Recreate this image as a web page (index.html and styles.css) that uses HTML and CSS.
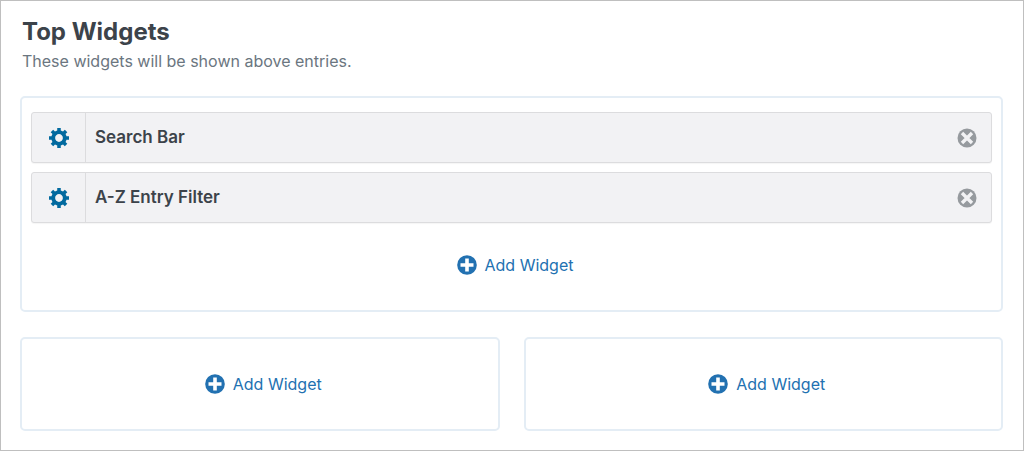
FILE: index.html
```html
<!DOCTYPE html>
<html lang="en">
<head>
<meta charset="utf-8">
<title>Top Widgets</title>
<link rel="stylesheet" href="styles.css">
</head>
<body>
<svg class="sprite" aria-hidden="true">
  <symbol id="gear" viewBox="1 2 17 17"><path fill-rule="evenodd" d="M18 12h-2.18c-.17.7-.44 1.35-.81 1.93l1.54 1.54-2.1 2.1-1.54-1.54c-.58.36-1.23.63-1.91.79V19H8v-2.18c-.68-.16-1.33-.43-1.91-.79l-1.54 1.54-2.12-2.12 1.54-1.54c-.36-.58-.63-1.23-.79-1.91H1V9.03h2.17c.16-.7.44-1.35.8-1.94L2.43 5.55l2.1-2.1 1.54 1.54c.58-.37 1.24-.64 1.93-.81V2h3v2.18c.68.16 1.33.43 1.91.79l1.54-1.54 2.12 2.12-1.54 1.54c.36.59.64 1.24.8 1.94H18V12zm-8.5 1.8c1.82 0 3.3-1.48 3.3-3.3s-1.48-3.3-3.3-3.3-3.3 1.48-3.3 3.3 1.48 3.3 3.3 3.3z"/></symbol>
  <symbol id="close" viewBox="0 0 20 20"><circle cx="10" cy="10" r="9.5"/><path d="M5 5l10 10M15 5L5 15" stroke="#f2f2f4" stroke-width="3.4"/></symbol>
  <symbol id="plus" viewBox="0 0 20 20"><circle cx="10" cy="10" r="9.8"/><path d="M10 3.5v13M3.5 10h13" stroke="#fff" stroke-width="3.6"/></symbol>
</svg>
<main class="panel">
  <header class="heading">
    <h1 class="title">Top Widgets</h1>
    <p class="subtitle">These widgets will be shown above entries.</p>
  </header>
  <div class="zones">
    <section class="zone zone-wide">
      <ul class="widgets">
        <li class="widget">
          <button class="settings" type="button" aria-label="Search Bar settings"><svg class="icon"><use href="#gear"/></svg></button>
          <span class="name">Search Bar</span>
          <button class="remove" type="button" aria-label="Remove Search Bar"><svg class="icon"><use href="#close"/></svg></button>
        </li>
        <li class="widget">
          <button class="settings" type="button" aria-label="A-Z Entry Filter settings"><svg class="icon"><use href="#gear"/></svg></button>
          <span class="name">A-Z Entry Filter</span>
          <button class="remove" type="button" aria-label="Remove A-Z Entry Filter"><svg class="icon"><use href="#close"/></svg></button>
        </li>
      </ul>
      <button class="add" type="button"><svg class="icon"><use href="#plus"/></svg>Add Widget</button>
    </section>
    <section class="zone">
      <button class="add" type="button"><svg class="icon"><use href="#plus"/></svg>Add Widget</button>
    </section>
    <section class="zone">
      <button class="add" type="button"><svg class="icon"><use href="#plus"/></svg>Add Widget</button>
    </section>
  </div>
</main>
</body>
</html>
```
FILE: styles.css
```css
* {
  box-sizing: border-box;
}

body {
  margin: 0;
  background: #fff;
  color: #3c434a;
  font: 16px/24px Inter, "Liberation Sans", sans-serif;
}

button {
  margin: 0;
  padding: 0;
  border: 0;
  background: none;
  font: inherit;
  cursor: pointer;
}

.sprite {
  display: none;
}

.icon {
  display: block;
  flex: none;
  width: 20px;
  height: 20px;
  fill: currentColor;
}

.panel {
  min-height: 100vh;
  padding: 15px 20px 18px 19px;
  border: 1px solid #bfbfbf;
}

.heading {
  padding-left: 2px;
}

.title {
  margin: 0;
  font-size: 24px;
  line-height: 32px;
  font-weight: 700;
}

.subtitle {
  margin: 0;
  padding-top: 1px;
  color: #6b7680;
}

.zones {
  display: grid;
  grid-template-columns: 1fr 1fr;
  gap: 25px 24px;
  margin-top: 23px;
}

.zone {
  display: flex;
  flex-direction: column;
  align-items: center;
  padding: 33px 9px;
  border: 2px solid #e4edf5;
  border-radius: 5px;
}

.zone-wide {
  grid-column: 1 / -1;
  padding-top: 14px;
}

.widgets {
  display: grid;
  gap: 9px;
  width: 100%;
  margin: 0 0 30px;
  padding: 0;
  list-style: none;
}

.widget {
  display: flex;
  height: 51px;
  border: 1px solid #dcdcde;
  border-radius: 3px;
  background: #f2f2f4;
  box-shadow: 0 1px 1px #0000000a;
}

.settings {
  display: grid;
  place-items: center;
  width: 54px;
  border-right: 1px solid #dcdcde;
  color: #026a9f;
}

.name {
  flex: 1;
  padding: 12px 9px;
  font-size: 17px;
  font-weight: 600;
}

.remove {
  display: grid;
  place-items: center;
  width: 48px;
  color: #969a9e;
}

.add {
  display: flex;
  align-items: center;
  gap: 8px;
  padding-left: 7px;
  color: #2271b1;
}
```
